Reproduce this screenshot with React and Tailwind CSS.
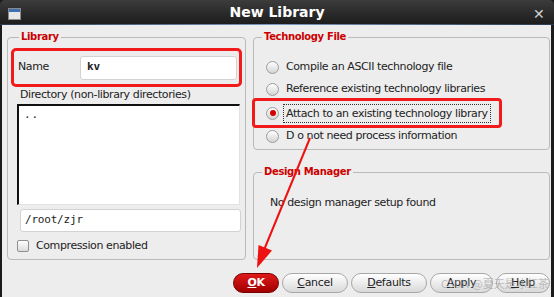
import React from "react"

const Radio = ({ on }) => (
  <span className="w-[13px] h-[13px] rounded-full border border-[#9c9c9c] bg-linear-to-b from-white to-[#d4d4d4] flex items-center justify-center shrink-0">
    {on && <span className="w-[6px] h-[6px] rounded-full bg-[#d40000]" />}
  </span>
)

const Btn = ({ w, u, rest, ok }) => (
  <div
    className={
      ok
        ? `${w} h-[20px] rounded-full border border-[#7a0000] bg-linear-to-b from-[#e01a1a] to-[#a00000] flex items-center justify-center text-white font-bold text-[11px]`
        : `${w} h-[20px] rounded-full border border-[#a8a8a8] bg-linear-to-b from-white to-[#d9d9d9] flex items-center justify-center text-[#222] text-[11px] tracking-[-0.3px]`
    }
  >
    <span><span className="underline">{u}</span>{rest}</span>
  </div>
)

const Legend = ({ children }) => (
  <legend className="ml-[8px] px-[2px] text-[10px] leading-[14px] font-bold text-[#cc0000] tracking-[-0.35px]">{children}</legend>
)

export default function App() {
  return (
    <div className="relative w-[554px] h-[297px] bg-[#1b1b1b] flex flex-col overflow-hidden font-['DejaVu_Sans',sans-serif] text-[11px] tracking-[-0.4px] text-[#222]">
      {/* title bar */}
      <div className="h-[25px] shrink-0 flex flex-col rounded-t-[5px] bg-linear-to-b from-[#3c3c3c] to-[#1c1c1c]">
        <div className="flex-1 relative flex items-center justify-center">
          <div className="absolute left-[8px] top-[8px] w-[13px] h-[12px] border border-[#8a8a8a] bg-[#e6e6e6] flex flex-col">
            <div className="h-[3px] bg-[#3e6fb4]" />
          </div>
          <span className="text-white font-bold text-[14px] tracking-[0px]">New Library</span>
          <span className="absolute left-[533px] top-[4px] text-[#d0d0d0] font-bold text-[14px]">✕</span>
        </div>
        <div className="h-[1px] bg-linear-to-r from-[#2a3a50] via-[#7d9cc4] to-[#2a3a50]" />
      </div>

      {/* body */}
      <div className="flex-1 ml-[2px] mr-[3px] bg-[#ededed] flex flex-col pl-[5px] pr-[1px]">
        <div className="flex gap-[7px] mt-[5px]">
          {/* Library */}
          <fieldset className="w-[239px] h-[230px] border border-[#b9b9b9] rounded-[4px] px-[3px] flex flex-col">
            <Legend>Library</Legend>
            <div className="mt-[4px] h-[39px] border-[3px] border-[#f21b1b] rounded-[5px] flex items-center">
              <span className="pl-[4px] w-[66px]">Name</span>
              <div className="w-[157px] h-[24px] bg-white border border-[#d2d2d2] rounded-[3px] flex items-center pl-[6px] font-['DejaVu_Sans_Mono',monospace] font-bold tracking-[0px]">kv</div>
            </div>
            <div className="ml-[9px] mt-[1px] leading-[14px]">Directory (non-library directories)</div>
            <div className="ml-[6px] mt-[2px] w-[223px] h-[101px] bg-white border-l-2 border-t-2 border-[#111] border-r border-b border-r-[#e2e2e2] border-b-[#e2e2e2] pl-[5px] pt-[1px] font-['DejaVu_Sans_Mono',monospace] tracking-[1px]">..</div>
            <div className="ml-[9px] mt-[4px] w-[221px] h-[23px] bg-white border border-[#d2d2d2] rounded-[3px] flex items-center pl-[4px] font-['DejaVu_Sans_Mono',monospace] tracking-[-0.2px]">/root/zjr</div>
            <div className="ml-[6px] mt-[6px] flex items-center gap-[7px]">
              <span className="w-[12px] h-[12px] rounded-[2px] border border-[#8f8f8f] bg-linear-to-b from-white to-[#dcdcdc]" />
              <span>Compression enabled</span>
            </div>
          </fieldset>

          <div className="w-[297px] flex flex-col">
            {/* Technology File */}
            <fieldset className="h-[120px] border border-[#b9b9b9] rounded-[4px] flex flex-col">
              <Legend>Technology File</Legend>
              <div className="mt-[12px] flex flex-col">
                <div className="h-[22px] flex items-center pl-[12px] gap-[7px]"><Radio /><span>Compile an ASCII technology file</span></div>
                <div className="h-[23px] flex items-center pl-[12px] gap-[7px]"><Radio /><span>Reference existing technology libraries</span></div>
                <div className="relative h-[24px] flex items-center pl-[12px] gap-[5px]">
                  <Radio on />
                  <span className="outline outline-1 outline-dotted outline-[#333] px-[2px] leading-[17px]">Attach to an existing technology library</span>
                  <div className="absolute left-[-2px] top-[-3px] w-[250px] h-[30px] border-[3px] border-[#f21b1b] rounded-[4px]" />
                </div>
                <div className="h-[22px] flex items-center pl-[12px] gap-[7px]"><Radio /><span>D o not need process information</span></div>
              </div>
            </fieldset>

            {/* Design Manager */}
            <fieldset className="mt-[15px] h-[95px] border border-[#b9b9b9] rounded-[4px] flex flex-col">
              <Legend>Design Manager</Legend>
              <div className="mt-[16px] pl-[16px]">No design manager setup found</div>
            </fieldset>
          </div>
        </div>

        {/* buttons */}
        <div className="mt-[13px] flex justify-end gap-[3px]">
          <Btn ok w="w-[46px]" u="O" rest="K" />
          <Btn w="w-[66px]" u="C" rest="ancel" />
          <Btn w="w-[76px]" u="D" rest="efaults" />
          <Btn w="w-[63px]" u="A" rest="pply" />
          <Btn w="w-[54px]" u="H" rest="elp" />
        </div>
      </div>

      {/* watermark */}
      <span className="absolute left-[441px] top-[275px] text-[11px] tracking-[0px] text-[#9a9a9a]/60 font-['Noto_Sans_CJK_SC',sans-serif]">CSDN @夏天是冰红茶</span>

      {/* annotation arrow */}
      <svg className="absolute left-0 top-0 pointer-events-none" width="554" height="297" viewBox="0 0 554 297">
        <line x1="310" y1="138" x2="264" y2="250" stroke="#ee1111" strokeWidth="2" />
        <polygon points="257,268 258.5,245 272,250.5" fill="#ee1111" />
      </svg>
    </div>
  )
}
